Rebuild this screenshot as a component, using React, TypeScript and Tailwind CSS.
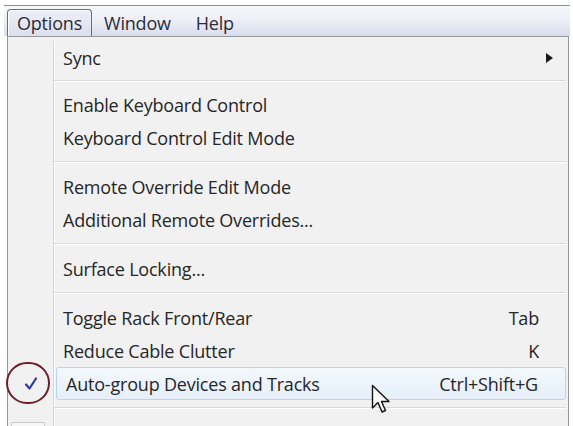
import React from "react";

type Item = { label: string; shortcut?: string; submenu?: boolean; checked?: boolean; hover?: boolean };

const groups: Item[][] = [
  [{ label: "Sync", submenu: true }],
  [{ label: "Enable Keyboard Control" }, { label: "Keyboard Control Edit Mode" }],
  [{ label: "Remote Override Edit Mode" }, { label: "Additional Remote Overrides..." }],
  [{ label: "Surface Locking..." }],
  [
    { label: "Toggle Rack Front/Rear", shortcut: "Tab" },
    { label: "Reduce Cable Clutter", shortcut: "K" },
    { label: "Auto-group Devices and Tracks", shortcut: "Ctrl+Shift+G", checked: true, hover: true },
  ],
];

function Row({ item }: { item: Item }) {
  return (
    <div className="flex h-[33px] relative">
      <div className="w-[45px] shrink-0 border-r border-[#d6d6d6] shadow-[1px_0_0_#ffffff] relative flex items-center justify-center">
        {item.checked && (
          <>
            <svg width="16" height="16" viewBox="0 0 16 16" className="ml-[0px]">
              <path d="M3 8.5 L6.5 12.5 L13 2.5" fill="none" stroke="#2c3a9e" strokeWidth="2.2" strokeLinecap="round" strokeLinejoin="round" />
            </svg>
            <div className="absolute left-[-3px] top-[-5px] w-[44px] h-[42px] rounded-full border-2 border-[#6b1f2e]" />
          </>
        )}
      </div>
      <div
        className={
          "flex-1 flex items-center pl-[9px] pr-[27px] mr-[2px] " +
          (item.hover
            ? "ml-[2px] pl-[7px] rounded-[3px] border border-[#b9d4ee] bg-gradient-to-b from-[#f3f8fd] to-[#e6eff9]"
            : "")
        }
      >
        <span className="flex-1 text-[#262626]">{item.label}</span>
        {item.shortcut && <span className="text-[#262626]">{item.shortcut}</span>}
        {item.submenu && (
          <svg width="7" height="10" viewBox="0 0 7 10" className="mr-[-14px]">
            <path d="M0 0 L7 5 L0 10 Z" fill="#1a1a1a" />
          </svg>
        )}
      </div>
      {item.hover && (
        <svg width="22" height="32" viewBox="0 0 22 32" className="absolute left-[362px] top-[17px]">
          <path d="M1.5 1.5 L1.5 24 L7 18.5 L11 28 L14.5 26.5 L10.5 17.5 L18 17.5 Z" fill="#ffffff" stroke="#111111" strokeWidth="1.4" strokeLinejoin="round" />
        </svg>
      )}
    </div>
  );
}

function Sep({ h = "h-[16px]" }: { h?: string }) {
  return (
    <div className={"flex " + h}>
      <div className="w-[45px] shrink-0 border-r border-[#d6d6d6] shadow-[1px_0_0_#ffffff]" />
      <div className="flex-1 flex items-center mr-[2px]">
        <div className="w-full h-[2px] border-t border-[#d9d9d9] border-b border-b-white" />
      </div>
    </div>
  );
}

export default function App() {
  return (
    <div className="w-[573px] h-[426px] bg-white overflow-hidden font-['Open_Sans',sans-serif] text-[18px] font-medium leading-none tracking-[-0.2px]">
      <div className="h-[5px]" />
      <div className="ml-[4px] mr-[3px] border-t border-[#8d8d8d] h-[31px] bg-gradient-to-b from-[#f8f9fc] via-[#eceef6] to-[#d9dcec] flex items-end pl-[3px]">
        <div className="h-[27px] w-[85px] border border-b-0 border-[#6e6e6e] rounded-t-[4px] bg-gradient-to-b from-[#eef0f7] to-[#dcdfec] shadow-[inset_1px_1px_0_#ffffff] flex items-center justify-center text-[#2b2b3a]">
          Options
        </div>
        <div className="h-[27px] flex items-center ml-[12px] text-[#2b2b3a]">Window</div>
        <div className="h-[27px] flex items-center ml-[25px] text-[#2b2b3a]">Help</div>
      </div>
      <div className="ml-[7px] mr-[4px] h-[400px] border border-[#979797] bg-[#f1f1f1] pt-[4px] pl-[1px]">
        {groups.map((g, gi) => (
          <React.Fragment key={gi}>
            {gi === 1 && <Sep h="h-[14px]" />}
            {gi > 1 && <Sep />}
            {g.map((it) => (
              <Row key={it.label} item={it} />
            ))}
          </React.Fragment>
        ))}
        <Sep />
        <div className="flex h-[33px]">
          <div className="w-[45px] shrink-0 border-r border-[#d6d6d6] shadow-[1px_0_0_#ffffff] relative">
            <div className="absolute left-[2px] top-[6px] w-[34px] h-[20px] border border-[#c9c9c9] rounded-[2px] bg-[#f6f6f6]" />
          </div>
          <div className="flex-1" />
        </div>
      </div>
    </div>
  );
}
